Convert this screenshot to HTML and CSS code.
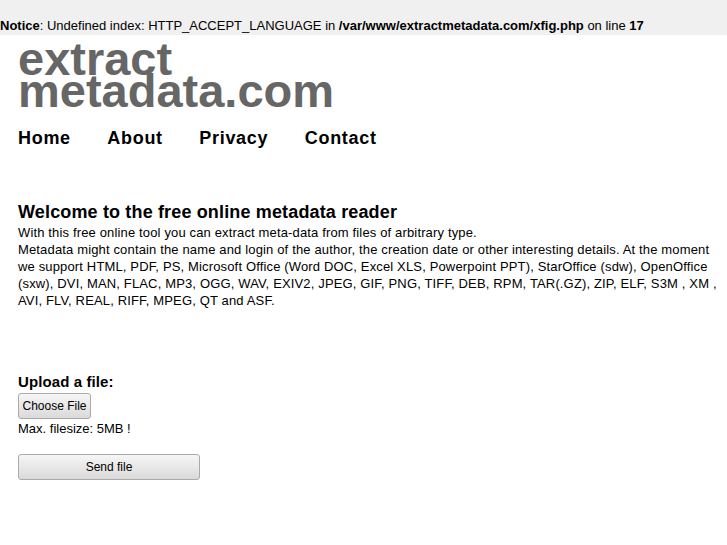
FILE: index.html
```html
<!DOCTYPE html>
<html>
<head>
<meta charset="utf-8">
<link rel="stylesheet" href="styles.css">
</head>
<body>
<div class="notice"><b>Notice</b>: Undefined index: HTTP_ACCEPT_LANGUAGE in <b>/var/www/extractmetadata.com/xfig.php</b> on line <b>17</b></div>
<div class="page">
  <div class="logo"><div>extract</div><div>metadata.com</div></div>
  <nav class="nav">
    <a href="#">Home</a>
    <a href="#">About</a>
    <a href="#">Privacy</a>
    <a href="#">Contact</a>
  </nav>
  <h1 class="title">Welcome to the free online metadata reader</h1>
  <p class="intro">With this free online tool you can extract meta-data from files of arbitrary type.<br>
  Metadata might contain the name and login of the author, the creation date or other interesting details. At the moment we support HTML, PDF, PS, Microsoft Office (Word DOC, Excel XLS, Powerpoint PPT), StarOffice (sdw), OpenOffice (sxw), DVI, MAN, FLAC, MP3, OGG, WAV, EXIV2, JPEG, GIF, PNG, TIFF, DEB, RPM, TAR(.GZ), ZIP, ELF, S3M , XM , AVI, FLV, REAL, RIFF, MPEG, QT and ASF.</p>
  <form class="upload">
    <h2 class="upload-title">Upload a file:</h2>
    <button type="button" class="btn choose">Choose File</button>
    <div class="max">Max. filesize: 5MB !</div>
    <button type="button" class="btn send">Send file</button>
  </form>
</div>
</body>
</html>
```
FILE: styles.css
```css
html, body {
  margin: 0;
  padding: 0;
  background: #fff;
  font-family: "Liberation Sans", Arial, sans-serif;
  color: #000;
}
.notice {
  background: #f0f0f0;
  height: 35px;
  box-sizing: border-box;
  padding-top: 18px;
  font-size: 13px;
  line-height: 16px;
  white-space: nowrap;
}
.page {
  padding: 0 0 0 18px;
  width: 700px;
}
.logo {
  margin-top: 8px;
  color: #666;
  font-weight: bold;
  font-size: 47px;
  line-height: 32px;
}
.nav {
  display: flex;
  gap: 36.5px;
  margin-top: 20px;
}
.nav a {
  color: #000;
  text-decoration: none;
  font-weight: bold;
  font-size: 18px;
  letter-spacing: 0.7px;
  line-height: 22px;
}
.title {
  margin: 53px 0 0;
  font-size: 18px;
  letter-spacing: 0.15px;
  line-height: 20px;
  font-weight: bold;
}
.intro {
  margin: 2px 0 0;
  font-size: 13px;
  letter-spacing: 0.15px;
  line-height: 17px;
}
.upload {
  margin-top: 64px;
}
.upload-title {
  margin: 0;
  font-size: 15px;
  letter-spacing: 0.1px;
  line-height: 18px;
}
.btn {
  display: block;
  font-family: "Liberation Sans", Arial, sans-serif;
  font-size: 12px;
  color: #000;
  background: linear-gradient(#f6f6f6, #dadada);
  border: 1px solid #aaa;
  border-radius: 3px;
  padding: 0;
}
.choose {
  margin-top: 2px;
  width: 73px;
  height: 26px;
}
.max {
  font-size: 13px;
  line-height: 17px;
  margin-top: 1px;
}
.send {
  margin-top: 17px;
  width: 182px;
  height: 26px;
}
```
